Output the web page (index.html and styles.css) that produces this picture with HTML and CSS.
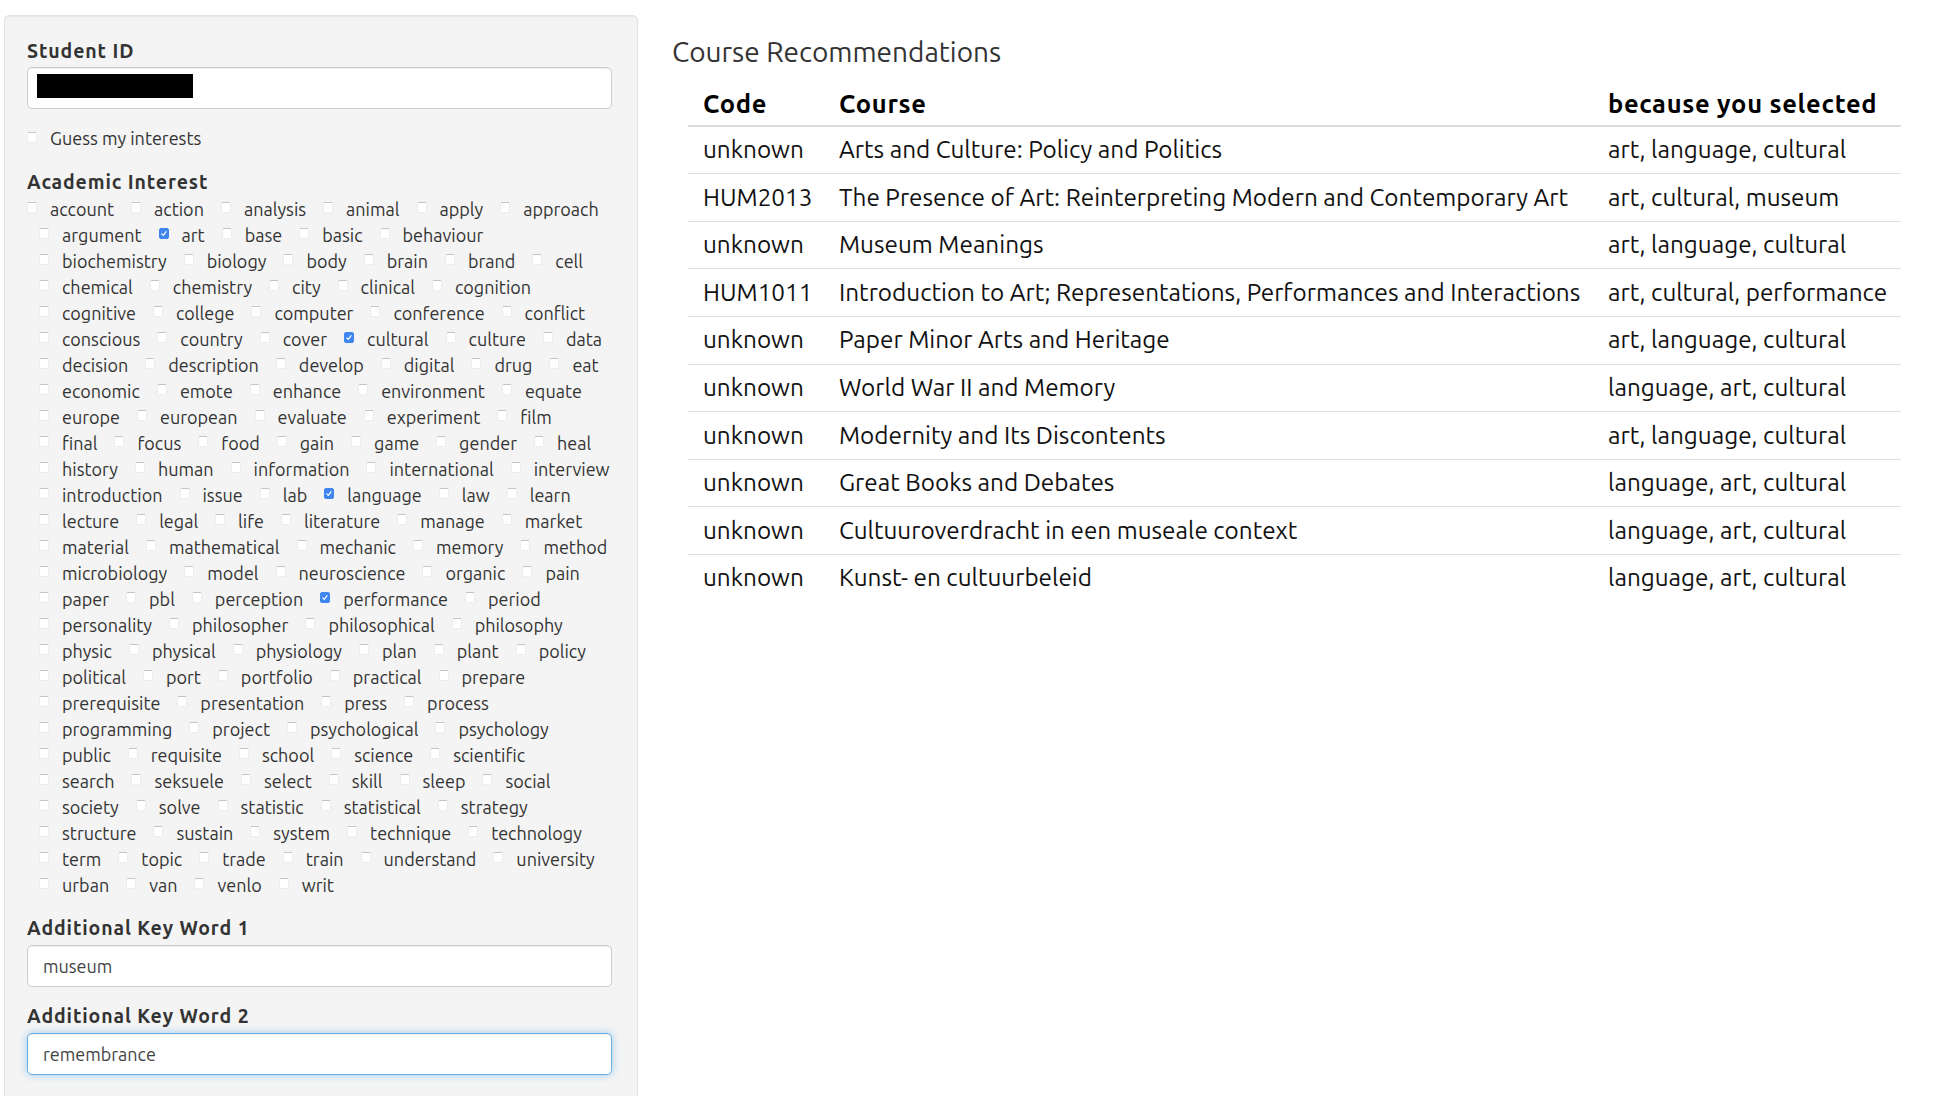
FILE: index.html
```html
<!DOCTYPE html>
<html lang="en">
<head>
<meta charset="utf-8">
<title>Course Recommendations</title>
<link rel="stylesheet" href="styles.css">
</head>
<body>
<div class="page">
  <aside class="well">
    <div class="form-group first">
      <label class="control-label">Student ID</label>
      <div class="field"><input class="form-control" type="text" aria-label="Student ID"><span class="redact"></span></div>
    </div>
    <div class="form-group single">
      <label class="cb"><input type="checkbox"><span>Guess my interests</span></label>
    </div>
    <div class="form-group group">
      <label class="control-label">Academic Interest</label>
      <div class="cb-group">
        <div class="cb-row"><label class="cb"><input type="checkbox"><span>account</span></label><label class="cb"><input type="checkbox"><span>action</span></label><label class="cb"><input type="checkbox"><span>analysis</span></label><label class="cb"><input type="checkbox"><span>animal</span></label><label class="cb"><input type="checkbox"><span>apply</span></label><label class="cb"><input type="checkbox"><span>approach</span></label></div>
        <div class="cb-row"><label class="cb"><input type="checkbox"><span>argument</span></label><label class="cb"><input type="checkbox" checked><span>art</span></label><label class="cb"><input type="checkbox"><span>base</span></label><label class="cb"><input type="checkbox"><span>basic</span></label><label class="cb"><input type="checkbox"><span>behaviour</span></label></div>
        <div class="cb-row"><label class="cb"><input type="checkbox"><span>biochemistry</span></label><label class="cb"><input type="checkbox"><span>biology</span></label><label class="cb"><input type="checkbox"><span>body</span></label><label class="cb"><input type="checkbox"><span>brain</span></label><label class="cb"><input type="checkbox"><span>brand</span></label><label class="cb"><input type="checkbox"><span>cell</span></label></div>
        <div class="cb-row"><label class="cb"><input type="checkbox"><span>chemical</span></label><label class="cb"><input type="checkbox"><span>chemistry</span></label><label class="cb"><input type="checkbox"><span>city</span></label><label class="cb"><input type="checkbox"><span>clinical</span></label><label class="cb"><input type="checkbox"><span>cognition</span></label></div>
        <div class="cb-row"><label class="cb"><input type="checkbox"><span>cognitive</span></label><label class="cb"><input type="checkbox"><span>college</span></label><label class="cb"><input type="checkbox"><span>computer</span></label><label class="cb"><input type="checkbox"><span>conference</span></label><label class="cb"><input type="checkbox"><span>conflict</span></label></div>
        <div class="cb-row"><label class="cb"><input type="checkbox"><span>conscious</span></label><label class="cb"><input type="checkbox"><span>country</span></label><label class="cb"><input type="checkbox"><span>cover</span></label><label class="cb"><input type="checkbox" checked><span>cultural</span></label><label class="cb"><input type="checkbox"><span>culture</span></label><label class="cb"><input type="checkbox"><span>data</span></label></div>
        <div class="cb-row"><label class="cb"><input type="checkbox"><span>decision</span></label><label class="cb"><input type="checkbox"><span>description</span></label><label class="cb"><input type="checkbox"><span>develop</span></label><label class="cb"><input type="checkbox"><span>digital</span></label><label class="cb"><input type="checkbox"><span>drug</span></label><label class="cb"><input type="checkbox"><span>eat</span></label></div>
        <div class="cb-row"><label class="cb"><input type="checkbox"><span>economic</span></label><label class="cb"><input type="checkbox"><span>emote</span></label><label class="cb"><input type="checkbox"><span>enhance</span></label><label class="cb"><input type="checkbox"><span>environment</span></label><label class="cb"><input type="checkbox"><span>equate</span></label></div>
        <div class="cb-row"><label class="cb"><input type="checkbox"><span>europe</span></label><label class="cb"><input type="checkbox"><span>european</span></label><label class="cb"><input type="checkbox"><span>evaluate</span></label><label class="cb"><input type="checkbox"><span>experiment</span></label><label class="cb"><input type="checkbox"><span>film</span></label></div>
        <div class="cb-row"><label class="cb"><input type="checkbox"><span>final</span></label><label class="cb"><input type="checkbox"><span>focus</span></label><label class="cb"><input type="checkbox"><span>food</span></label><label class="cb"><input type="checkbox"><span>gain</span></label><label class="cb"><input type="checkbox"><span>game</span></label><label class="cb"><input type="checkbox"><span>gender</span></label><label class="cb"><input type="checkbox"><span>heal</span></label></div>
        <div class="cb-row"><label class="cb"><input type="checkbox"><span>history</span></label><label class="cb"><input type="checkbox"><span>human</span></label><label class="cb"><input type="checkbox"><span>information</span></label><label class="cb"><input type="checkbox"><span>international</span></label><label class="cb"><input type="checkbox"><span>interview</span></label></div>
        <div class="cb-row"><label class="cb"><input type="checkbox"><span>introduction</span></label><label class="cb"><input type="checkbox"><span>issue</span></label><label class="cb"><input type="checkbox"><span>lab</span></label><label class="cb"><input type="checkbox" checked><span>language</span></label><label class="cb"><input type="checkbox"><span>law</span></label><label class="cb"><input type="checkbox"><span>learn</span></label></div>
        <div class="cb-row"><label class="cb"><input type="checkbox"><span>lecture</span></label><label class="cb"><input type="checkbox"><span>legal</span></label><label class="cb"><input type="checkbox"><span>life</span></label><label class="cb"><input type="checkbox"><span>literature</span></label><label class="cb"><input type="checkbox"><span>manage</span></label><label class="cb"><input type="checkbox"><span>market</span></label></div>
        <div class="cb-row"><label class="cb"><input type="checkbox"><span>material</span></label><label class="cb"><input type="checkbox"><span>mathematical</span></label><label class="cb"><input type="checkbox"><span>mechanic</span></label><label class="cb"><input type="checkbox"><span>memory</span></label><label class="cb"><input type="checkbox"><span>method</span></label></div>
        <div class="cb-row"><label class="cb"><input type="checkbox"><span>microbiology</span></label><label class="cb"><input type="checkbox"><span>model</span></label><label class="cb"><input type="checkbox"><span>neuroscience</span></label><label class="cb"><input type="checkbox"><span>organic</span></label><label class="cb"><input type="checkbox"><span>pain</span></label></div>
        <div class="cb-row"><label class="cb"><input type="checkbox"><span>paper</span></label><label class="cb"><input type="checkbox"><span>pbl</span></label><label class="cb"><input type="checkbox"><span>perception</span></label><label class="cb"><input type="checkbox" checked><span>performance</span></label><label class="cb"><input type="checkbox"><span>period</span></label></div>
        <div class="cb-row"><label class="cb"><input type="checkbox"><span>personality</span></label><label class="cb"><input type="checkbox"><span>philosopher</span></label><label class="cb"><input type="checkbox"><span>philosophical</span></label><label class="cb"><input type="checkbox"><span>philosophy</span></label></div>
        <div class="cb-row"><label class="cb"><input type="checkbox"><span>physic</span></label><label class="cb"><input type="checkbox"><span>physical</span></label><label class="cb"><input type="checkbox"><span>physiology</span></label><label class="cb"><input type="checkbox"><span>plan</span></label><label class="cb"><input type="checkbox"><span>plant</span></label><label class="cb"><input type="checkbox"><span>policy</span></label></div>
        <div class="cb-row"><label class="cb"><input type="checkbox"><span>political</span></label><label class="cb"><input type="checkbox"><span>port</span></label><label class="cb"><input type="checkbox"><span>portfolio</span></label><label class="cb"><input type="checkbox"><span>practical</span></label><label class="cb"><input type="checkbox"><span>prepare</span></label></div>
        <div class="cb-row"><label class="cb"><input type="checkbox"><span>prerequisite</span></label><label class="cb"><input type="checkbox"><span>presentation</span></label><label class="cb"><input type="checkbox"><span>press</span></label><label class="cb"><input type="checkbox"><span>process</span></label></div>
        <div class="cb-row"><label class="cb"><input type="checkbox"><span>programming</span></label><label class="cb"><input type="checkbox"><span>project</span></label><label class="cb"><input type="checkbox"><span>psychological</span></label><label class="cb"><input type="checkbox"><span>psychology</span></label></div>
        <div class="cb-row"><label class="cb"><input type="checkbox"><span>public</span></label><label class="cb"><input type="checkbox"><span>requisite</span></label><label class="cb"><input type="checkbox"><span>school</span></label><label class="cb"><input type="checkbox"><span>science</span></label><label class="cb"><input type="checkbox"><span>scientific</span></label></div>
        <div class="cb-row"><label class="cb"><input type="checkbox"><span>search</span></label><label class="cb"><input type="checkbox"><span>seksuele</span></label><label class="cb"><input type="checkbox"><span>select</span></label><label class="cb"><input type="checkbox"><span>skill</span></label><label class="cb"><input type="checkbox"><span>sleep</span></label><label class="cb"><input type="checkbox"><span>social</span></label></div>
        <div class="cb-row"><label class="cb"><input type="checkbox"><span>society</span></label><label class="cb"><input type="checkbox"><span>solve</span></label><label class="cb"><input type="checkbox"><span>statistic</span></label><label class="cb"><input type="checkbox"><span>statistical</span></label><label class="cb"><input type="checkbox"><span>strategy</span></label></div>
        <div class="cb-row"><label class="cb"><input type="checkbox"><span>structure</span></label><label class="cb"><input type="checkbox"><span>sustain</span></label><label class="cb"><input type="checkbox"><span>system</span></label><label class="cb"><input type="checkbox"><span>technique</span></label><label class="cb"><input type="checkbox"><span>technology</span></label></div>
        <div class="cb-row"><label class="cb"><input type="checkbox"><span>term</span></label><label class="cb"><input type="checkbox"><span>topic</span></label><label class="cb"><input type="checkbox"><span>trade</span></label><label class="cb"><input type="checkbox"><span>train</span></label><label class="cb"><input type="checkbox"><span>understand</span></label><label class="cb"><input type="checkbox"><span>university</span></label></div>
        <div class="cb-row"><label class="cb"><input type="checkbox"><span>urban</span></label><label class="cb"><input type="checkbox"><span>van</span></label><label class="cb"><input type="checkbox"><span>venlo</span></label><label class="cb"><input type="checkbox"><span>writ</span></label></div>
      </div>
    </div>
    <div class="form-group">
      <label class="control-label">Additional Key Word 1</label>
      <input class="form-control" type="text" value="museum" aria-label="Additional Key Word 1">
    </div>
    <div class="form-group">
      <label class="control-label">Additional Key Word 2</label>
      <input class="form-control focused" type="text" value="remembrance" aria-label="Additional Key Word 2">
    </div>
  </aside>

  <main class="main">
    <h3 class="title">Course Recommendations</h3>
    <table class="recs">
      <colgroup><col class="c-code"><col class="c-course"><col class="c-why"></colgroup>
      <thead>
        <tr><th>Code</th><th>Course</th><th>because you selected</th></tr>
      </thead>
      <tbody>
        <tr><td>unknown</td><td>Arts and Culture: Policy and Politics</td><td>art, language, cultural</td></tr>
        <tr><td>HUM2013</td><td>The Presence of Art: Reinterpreting Modern and Contemporary Art</td><td>art, cultural, museum</td></tr>
        <tr><td>unknown</td><td>Museum Meanings</td><td>art, language, cultural</td></tr>
        <tr><td>HUM1011</td><td>Introduction to Art; Representations, Performances and Interactions</td><td>art, cultural, performance</td></tr>
        <tr><td>unknown</td><td>Paper Minor Arts and Heritage</td><td>art, language, cultural</td></tr>
        <tr><td>unknown</td><td>World War II and Memory</td><td>language, art, cultural</td></tr>
        <tr><td>unknown</td><td>Modernity and Its Discontents</td><td>art, language, cultural</td></tr>
        <tr><td>unknown</td><td>Great Books and Debates</td><td>language, art, cultural</td></tr>
        <tr><td>unknown</td><td>Cultuuroverdracht in een museale context</td><td>language, art, cultural</td></tr>
        <tr><td>unknown</td><td>Kunst- en cultuurbeleid</td><td>language, art, cultural</td></tr>
      </tbody>
    </table>
  </main>
</div>
</body>
</html>
```

FILE: styles.css
```css
* { box-sizing: border-box; }

html, body {
  margin: 0;
  padding: 0;
  background: #fff;
}

body {
  font-family: "Ubuntu", "Lato", "Noto Sans", sans-serif;
  font-size: 18px;
  line-height: 25px;
  color: #333;
  overflow: hidden;
}

.page {
  display: flex;
  align-items: flex-start;
}

/* ---------- sidebar ---------- */
.well {
  flex: 0 0 634px;
  width: 634px;
  margin: 15px 0 0 4px;
  padding: 22px 25px 24px 22px;
  background: #f4f4f4;
  border: 1px solid #e3e3e3;
  border-radius: 5px;
  box-shadow: inset 0 1px 1px rgba(0, 0, 0, 0.05);
}

.form-group {
  margin-bottom: 15px;
}

.form-group.first,
.form-group.single {
  margin-bottom: 17px;
}

.form-group.group {
  margin-bottom: 16px;
}

.control-label {
  display: block;
  font-size: 19.5px;
  font-weight: 700;
  letter-spacing: 0.9px;
  line-height: 21px;
  padding-top: 4px;
  margin-bottom: 6px;
  color: #333;
}

.form-group.first .control-label {
  padding-top: 2px;
  line-height: 23px;
  margin-bottom: 4px;
}

.form-group.group .control-label {
  margin-bottom: 3px;
}

.field {
  position: relative;
}

.form-control {
  display: block;
  width: 100%;
  height: 42px;
  padding: 7px 15px;
  font-family: inherit;
  font-size: 18px;
  color: #444;
  background: #fff;
  border: 1px solid #ccc;
  border-radius: 5px;
  box-shadow: inset 0 1px 1px rgba(0, 0, 0, 0.075);
  outline: none;
}

.form-control.focused {
  border-color: #66afe9;
  box-shadow: inset 0 1px 1px rgba(0, 0, 0, 0.075), 0 0 8px rgba(102, 175, 233, 0.6);
}

.redact {
  position: absolute;
  left: 10px;
  top: 7px;
  width: 156px;
  height: 24px;
  background: #000;
}

/* checkboxes */
.cb {
  position: relative;
  display: inline-block;
  padding-left: 23px;
  line-height: 26px;
  font-weight: 400;
  white-space: nowrap;
}

.single .cb {
  line-height: 25px;
}

.cb input {
  -webkit-appearance: none;
  appearance: none;
  position: absolute;
  left: 0;
  top: 6px;
  width: 10px;
  height: 11px;
  margin: 0;
  background: #fff;
  border: 1px solid #ececec;
  border-top-color: #c4c4c4;
  border-radius: 2px;
}

.cb input:checked {
  background: #3f86f0 url("data:image/svg+xml;utf8,<svg xmlns='http://www.w3.org/2000/svg' viewBox='0 0 10 11'><path d='M2.2 5.9 L4.1 7.8 L7.6 3.2' stroke='white' stroke-width='1.5' fill='none' stroke-linecap='round' stroke-linejoin='round'/></svg>") center / 100% 100% no-repeat;
  border-color: #3f86f0;
}

.cb-row {
  display: flex;
  gap: 17px;
  height: 26px;
}

.cb-row + .cb-row {
  padding-left: 12px;
}

/* ---------- main ---------- */
.main {
  flex: 1 1 auto;
  margin-left: 34px;
  padding-top: 35px;
}

.title {
  margin: 0 0 9px;
  font-size: 28px;
  line-height: 34px;
  font-weight: 400;
  color: #333;
}

.recs {
  margin-left: 16px;
  width: 1213px;
  table-layout: fixed;
  border-collapse: collapse;
  font-size: 24.3px;
  line-height: 33.6px;
  color: #111;
}

.c-code { width: 136px; }
.c-course { width: 769px; }
.c-why { width: 308px; }

.recs th,
.recs td {
  padding: 6.5px 15px;
  text-align: left;
  white-space: nowrap;
  vertical-align: top;
}

.recs th {
  padding: 9px 15px 4px;
  font-size: 25.5px;
  letter-spacing: 0.7px;
  font-weight: 700;
  color: #000;
  border-bottom: 2px solid #ddd;
}

.recs td {
  border-top: 1px solid #ddd;
}
```
